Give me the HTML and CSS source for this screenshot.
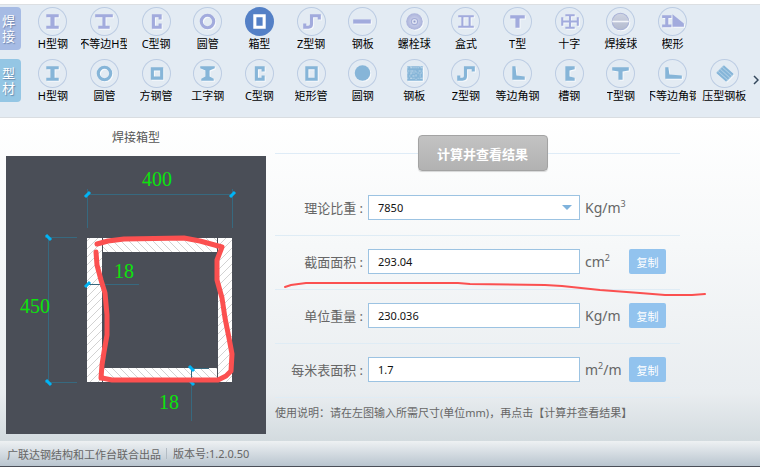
FILE: index.html
```html
<!DOCTYPE html>
<html lang="zh-CN">
<head>
    <meta charset="UTF-8">
    <meta name="viewport" content="width=device-width, initial-scale=1.0">
    <title>焊接箱型</title>
    <link rel="stylesheet" href="styles.css">
</head>
<body>
    <!-- section icons -->
    <svg class="sprite" aria-hidden="true">
        <symbol id="i-beam" viewBox="0 0 28 28"><path fill="currentColor" d="M8 7h12v3h-4v8h4v3H8v-3h4v-8H8z"/></symbol>
        <symbol id="i-beam-wide" viewBox="0 0 28 28"><path fill="currentColor" d="M5 7h17v3h-7v8h4v3H8v-3h4v-8H5z"/></symbol>
        <symbol id="i-joist" viewBox="0 0 28 28"><path fill="currentColor" d="M7 7h14v2l-5 2v6l4 2v2H8v-2l4-2v-6L7 9z"/></symbol>
        <symbol id="i-c" viewBox="0 0 28 28"><path fill="none" stroke="currentColor" stroke-width="3" d="M17.500 12V8.500H11v11h6.500V16"/></symbol>
        <symbol id="i-ring" viewBox="0 0 28 28"><circle cx="14" cy="14" r="6" fill="none" stroke="currentColor" stroke-width="3"/></symbol>
        <symbol id="i-box" viewBox="0 0 28 28"><path fill="none" stroke="currentColor" stroke-width="3" d="M9.500 8.500h9v11h-9z"/></symbol>
        <symbol id="i-square" viewBox="0 0 28 28"><path fill="none" stroke="currentColor" stroke-width="3" d="M10 9.500h9v9h-9z"/></symbol>
        <symbol id="i-z" viewBox="0 0 28 28"><path fill="none" stroke="currentColor" stroke-width="3" d="M7.500 16v3.500H11q3 0 3-3V8.500h7.500V12"/></symbol>
        <symbol id="i-plate" viewBox="0 0 28 28"><path fill="currentColor" d="M5 12h17v4H5z"/></symbol>
        <symbol id="i-bolt-ball" viewBox="0 0 28 28">
            <circle cx="14" cy="14" r="8" fill="url(#ball)"/>
            <circle cx="14" cy="14" r="3" fill="#dde1f1" stroke="#a3acd6"/>
            <circle cx="14" cy="14" r="1" fill="#8f9ac9"/>
        </symbol>
        <symbol id="i-double" viewBox="0 0 28 28"><path fill="none" stroke="currentColor" stroke-width="2" d="M7 9h15M7 19h15M11 9v10M18 9v10"/></symbol>
        <symbol id="i-t" viewBox="0 0 28 28"><path fill="currentColor" d="M7 8h14v3h-5v9h-4v-9H7z"/></symbol>
        <symbol id="i-cross" viewBox="0 0 28 28"><path fill="none" stroke="currentColor" stroke-width="2" d="M7 14h15M14.500 8v13M7 10v8M22 10v8M10 8h9M10 20h9"/></symbol>
        <symbol id="i-weld-ball" viewBox="0 0 28 28">
            <circle cx="14" cy="14" r="8" fill="url(#ball-gray)" stroke="#a9b2d6"/>
            <path stroke="#f3f5fa" stroke-width="1.500" d="M6 14h16"/>
        </symbol>
        <symbol id="i-wedge" viewBox="0 0 28 28"><path fill="currentColor" d="M4 8h9v2.500h-3v6.500h3v2.500H4V17h3v-6.500H4zM14 7l11 9v3H14z"/></symbol>
        <symbol id="i-disc" viewBox="0 0 28 28"><circle cx="14" cy="13.500" r="7.500" fill="currentColor"/></symbol>
        <symbol id="i-checker" viewBox="0 0 28 28">
            <path fill="currentColor" d="M7 7h15v14H7z"/>
            <path stroke="#c5dcec" stroke-width="1" stroke-dasharray="1 2 2 1 1 3" d="M7 8.500h15M8 11.500h14M7 13.500h14M9 16.500h13M7 18.500h15"/>
            <path stroke="#c5dcec" stroke-width="1" stroke-dasharray="1 3 1 2" d="M10.500 7v14M15.500 8v13M19.500 7v14"/>
        </symbol>
        <symbol id="i-angle" viewBox="0 0 28 28"><path fill="currentColor" d="M9 7h3l1 9 8 1v3H9z"/></symbol>
        <symbol id="i-angle-wide" viewBox="0 0 28 28"><path fill="currentColor" d="M7 8h3l1 7 12 1v3H7z"/></symbol>
        <symbol id="i-channel" viewBox="0 0 28 28"><path fill="currentColor" d="M10 7h9v3l-5 1v6l5 1v3h-9z"/></symbol>
        <symbol id="i-tee" viewBox="0 0 28 28"><path fill="currentColor" d="M6 8h16v3l-6 1v8h-4v-8l-6-1z"/></symbol>
        <symbol id="i-deck" viewBox="0 0 28 28"><path fill="none" stroke="currentColor" stroke-width="2" d="M13 7l9 8M11 9l9 8M9 11l9 8M7 13l9 8"/><path fill="currentColor" fill-opacity=".6" d="M13 6l10 9-7 7-10-9z"/></symbol>
        <defs>
            <radialGradient id="ball"><stop offset="0" stop-color="#d8dcf0"/><stop offset="1" stop-color="#aab2da"/></radialGradient>
            <linearGradient id="ball-gray" x1="0" y1="0" x2="0" y2="1"><stop offset="0" stop-color="#cfd4e2"/><stop offset="1" stop-color="#b3bace"/></linearGradient>
        </defs>
    </svg>

    <nav class="toolbar">
        <div class="group welded">
            <button class="tab">焊接</button>
            <div class="sections">
                <button class="section"><svg><use href="#i-beam"/></svg><span>H型钢</span></button>
                <button class="section"><svg><use href="#i-beam-wide"/></svg><span>不等边H型</span></button>
                <button class="section"><svg><use href="#i-c"/></svg><span>C型钢</span></button>
                <button class="section"><svg><use href="#i-ring"/></svg><span>圆管</span></button>
                <button class="section active"><svg><use href="#i-box"/></svg><span>箱型</span></button>
                <button class="section"><svg><use href="#i-z"/></svg><span>Z型钢</span></button>
                <button class="section"><svg><use href="#i-plate"/></svg><span>钢板</span></button>
                <button class="section"><svg><use href="#i-bolt-ball"/></svg><span>螺栓球</span></button>
                <button class="section"><svg><use href="#i-double"/></svg><span>盒式</span></button>
                <button class="section"><svg><use href="#i-t"/></svg><span>T型</span></button>
                <button class="section"><svg><use href="#i-cross"/></svg><span>十字</span></button>
                <button class="section"><svg><use href="#i-weld-ball"/></svg><span>焊接球</span></button>
                <button class="section"><svg><use href="#i-wedge"/></svg><span>楔形</span></button>
            </div>
        </div>
        <div class="group profile">
            <button class="tab">型材</button>
            <div class="sections">
                <button class="section"><svg><use href="#i-beam"/></svg><span>H型钢</span></button>
                <button class="section"><svg><use href="#i-ring"/></svg><span>圆管</span></button>
                <button class="section"><svg><use href="#i-square"/></svg><span>方钢管</span></button>
                <button class="section"><svg><use href="#i-joist"/></svg><span>工字钢</span></button>
                <button class="section"><svg><use href="#i-c"/></svg><span>C型钢</span></button>
                <button class="section"><svg><use href="#i-box"/></svg><span>矩形管</span></button>
                <button class="section"><svg><use href="#i-disc"/></svg><span>圆钢</span></button>
                <button class="section"><svg><use href="#i-checker"/></svg><span>钢板</span></button>
                <button class="section"><svg><use href="#i-z"/></svg><span>Z型钢</span></button>
                <button class="section"><svg><use href="#i-angle"/></svg><span>等边角钢</span></button>
                <button class="section"><svg><use href="#i-channel"/></svg><span>槽钢</span></button>
                <button class="section"><svg><use href="#i-tee"/></svg><span>T型钢</span></button>
                <button class="section"><svg><use href="#i-angle-wide"/></svg><span>不等边角钢</span></button>
                <button class="section"><svg><use href="#i-deck"/></svg><span>压型钢板</span></button>
            </div>
            <button class="next" aria-label="更多"><svg viewBox="0 0 6 10"><path d="M1 1l4 4-4 4"/></svg></button>
        </div>
    </nav>

    <main class="content">
        <section class="preview">
            <h1>焊接箱型</h1>
            <svg class="drawing" viewBox="6 156 260 278">
                <defs>
                    <pattern id="hatch-up" width="8" height="8" patternUnits="userSpaceOnUse"><path class="hatch" d="M-1 9L9-1M-1 1l2-2M7 9l2-2"/></pattern>
                    <pattern id="hatch-down" width="8" height="8" patternUnits="userSpaceOnUse"><path class="hatch" d="M-1-1l10 10M7-1l2 2M-1 7l2 2"/></pattern>
                </defs>

                <!-- plates -->
                <path fill="#fff" d="M87 238h145v144H87zM102 252v116h115V252z" fill-rule="evenodd"/>
                <path fill="url(#hatch-up)" d="M87 238h15v144H87zM217 238h15v144h-15z"/>
                <path fill="url(#hatch-down)" d="M102 238h115v14H102zM102 368h115v14H102z"/>
                <path class="edge" d="M102.500 238v144M217.500 238v144"/>

                <!-- dimension lines -->
                <path class="dim" d="M87.500 189v39M232.500 189v39M87 194.500h145M45 237.500h32M45 382.500h32M48.500 237v145M87 284.500h52M191.500 366v55M190 368.500h19"/>
                <path class="tick" d="M85 197l5-5M230 197l5-5M46 235l5 5M46 380l5 5M85 287l5-5M101 287l3-3M189 366l5 5M190 381l4 4"/>
                <text x="142" y="186">400</text>
                <text x="20" y="313">450</text>
                <text x="114" y="278">18</text>
                <text x="159" y="409">18</text>

                <!-- pen marks -->
                <path class="pen" d="M97 244L108 241L124 239L184 238L200 241L222 247L217 260L217 280L222 298L225 318L229 338L232 354L231 371L226 376L218 380H112L102 378"/>
                <path class="pen" d="M96 252L97 265L101 280L105 293L107 315L107 335L104 352L102 365L101 378"/>
            </svg>
        </section>

        <form class="form">
            <div class="submit">
                <button type="button" class="calculate">计算并查看结果</button>
            </div>
            <div class="row">
                <label for="density">理论比重 :</label>
                <div class="select">
                    <select id="density"><option>7850</option></select>
                </div>
                <span class="unit">Kg/m<sup>3</sup></span>
            </div>
            <div class="row marked">
                <label for="area">截面面积 :</label>
                <input type="text" id="area" value="293.04">
                <span class="unit">cm<sup>2</sup></span>
                <button type="button" class="copy">复制</button>
                <svg class="underline" viewBox="0 0 422 14"><path d="M1 5L7 3L22 1H174L186 2L261 3L278 4L316 8L356 11L381 13H408L421 12"/></svg>
            </div>
            <div class="row">
                <label for="weight">单位重量 :</label>
                <input type="text" id="weight" value="230.036">
                <span class="unit">Kg/m</span>
                <button type="button" class="copy">复制</button>
            </div>
            <div class="row">
                <label for="surface">每米表面积 :</label>
                <input type="text" id="surface" value="1.7">
                <span class="unit">m<sup>2</sup>/m</span>
                <button type="button" class="copy">复制</button>
            </div>
            <p class="help">使用说明：请在左图输入所需尺寸(单位mm)，再点击【计算并查看结果】</p>
        </form>
    </main>

    <footer class="footer">
        <span>广联达钢结构和工作台联合出品</span>
        <span class="version">版本号:1.2.0.50</span>
    </footer>
</body>
</html>
```
FILE: styles.css
```css
* {
    box-sizing: border-box;
    margin: 0;
}

body {
    display: flex;
    flex-direction: column;
    min-height: 100vh;
    padding: 4px 0 2px;
    background-color: #fff;
    color: #666;
    font-family: "Noto Sans", "Noto Sans CJK SC", sans-serif;
    font-size: 11px;
}

button, input, select {
    font-family: inherit;
    font-size: 11px;
    padding: 0;
    border: none;
}

button {
    cursor: pointer;
}

.sprite {
    position: absolute;
    width: 0;
    height: 0;
}

/* toolbar */
.toolbar {
    display: flex;
    flex-direction: column;
    gap: 8px;
    padding: 2px 0 14px;
    background-color: #e3ebf3;
    border-top: 1px solid #dcdfe2;
    border-bottom: 1px solid #d9dde1;
}

.group {
    display: flex;
    align-items: flex-start;
    height: 44px;
}

.tab {
    width: 21px;
    height: 43px;
    padding: 0 6px 0 2px;
    border-radius: 0 4px 4px 0;
    color: #fff;
    font-size: 13px;
    line-height: 15px;
    text-shadow: 1px 1px 1px rgba(60, 80, 120, 0.5);
}

.welded .tab {
    background-color: #a6bbe4;
}

.profile .tab {
    background-color: #94c6e4;
}

.sections {
    flex: 1;
    display: grid;
    grid-template-columns: repeat(14, 1fr);
    margin: 0 10px 0 6px;
}

.section {
    display: flex;
    flex-direction: column;
    align-items: center;
    background: none;
    color: #000;
}

.section svg {
    width: 29px;
    height: 29px;
    border-radius: 50%;
    box-shadow: inset 0 0 0 1px #bccce3;
}

.section use {
    filter: drop-shadow(1px 1px 0 #f6f9fc);
}

.welded .section svg {
    color: #a2abdd;
}

.profile .section svg {
    color: #86b5d8;
}

.section.active svg {
    background-color: #5480c6;
    box-shadow: none;
    color: #fff;
}

.section.active use {
    filter: none;
}

.section span {
    display: flex;
    justify-content: center;
    max-width: 46px;
    overflow: hidden;
    white-space: nowrap;
    line-height: 16px;
}

.next {
    width: 6px;
    height: 10px;
    margin: 16px 1px 0 -7px;
    background: none;
}

.next svg {
    display: block;
    fill: none;
    stroke: #33475c;
    stroke-width: 1.5;
}

/* main area */
.content {
    flex: 1;
    display: flex;
    gap: 9px;
    padding: 0 80px 7px 6px;
    background: linear-gradient(#fff, #f6f8f9 40%, #e9edf0 85%, #d3dbdf);
}

.preview h1 {
    padding: 11px 0 9px;
    font-size: 12px;
    font-weight: normal;
    line-height: 18px;
    text-align: center;
    color: #555;
}

.drawing {
    display: block;
    width: 260px;
    background-color: #4a4e57;
}

.drawing text {
    fill: #0ce40c;
    font-family: "Liberation Serif", serif;
    font-size: 20px;
}

.hatch {
    fill: none;
    stroke: #d2d2d2;
}

.edge {
    stroke: #4a4e57;
}

.dim {
    fill: none;
    stroke: #37697f;
}

.tick {
    stroke: #00b4f5;
    stroke-width: 3;
}

.pen {
    fill: none;
    stroke: #fb5050;
    stroke-width: 5;
    stroke-linecap: round;
    stroke-linejoin: round;
}

.form {
    flex: 1;
    padding-top: 17px;
}

.submit {
    display: flex;
    align-items: center;
    margin-bottom: 11px;
}

.submit::before, .submit::after {
    content: "";
    flex: 13;
    border-top: 1px solid #dfecf7;
}

.submit::before {
    flex: 14;
}

.calculate {
    width: 130px;
    height: 36px;
    border: 1px solid #a3a3a3;
    border-radius: 4px;
    background: linear-gradient(#c3c3c3, #b2b2b2);
    box-shadow: 0 1px 1px rgba(0, 0, 0, 0.15);
    color: #fff;
    font-size: 13px;
    font-weight: bold;
}

.row {
    display: grid;
    grid-template-columns: 93px 1fr 49px 37px;
    align-items: center;
    padding: 13px 14px 15px 0;
    border-bottom: 1px solid #dfecf5;
}

.row label {
    padding-right: 5px;
    font-size: 13px;
    text-align: right;
}

.row input, .row select {
    width: 100%;
    height: 25px;
    padding: 0 9px;
    border: 1px solid #9cc3e2;
    border-radius: 0;
    background-color: #fff;
    color: #111;
}

.select {
    position: relative;
    display: flex;
}

.row select {
    appearance: none;
}

.select::after {
    content: "";
    position: absolute;
    right: 8px;
    top: 10px;
    border: 5px solid transparent;
    border-top-color: #7fb2dc;
    border-bottom: none;
    pointer-events: none;
}

.unit {
    padding-left: 5px;
    font-size: 14px;
    line-height: 24px;
}

.unit sup {
    font-size: 9px;
    line-height: 0;
}

.copy {
    height: 25px;
    border-radius: 2px;
    background-color: #92c3ee;
    color: #fff;
}

.marked {
    position: relative;
}

.underline {
    position: absolute;
    left: 9px;
    top: 46px;
    width: 422px;
    fill: none;
    stroke: #fb5050;
    stroke-width: 2;
    stroke-linecap: round;
    pointer-events: none;
}

.help {
    padding-top: 7px;
    line-height: 16px;
}

/* status bar */
.footer {
    display: flex;
    align-items: center;
    height: 26px;
    padding-left: 7px;
    border-bottom: 1px solid #4a4e57;
    background: linear-gradient(#eef1f3, #b9c5cf);
}

.version {
    margin-left: 5px;
    padding-left: 6px;
    border-left: 1px solid #b3bcc4;
    line-height: 11px;
}
```
